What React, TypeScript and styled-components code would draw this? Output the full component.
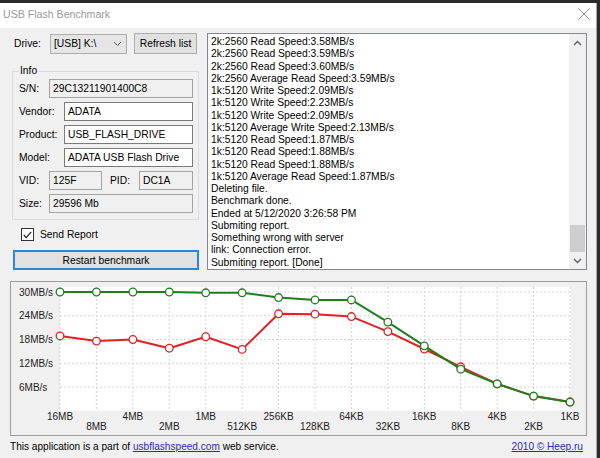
import React from "react";
import styled, { createGlobalStyle } from "styled-components";

const GlobalStyle = createGlobalStyle`
  html, body {
    margin: 0;
    padding: 0;
    background: #2b2b2b;
  }
  body {
    font-family: "Liberation Sans", Arial, sans-serif;
    font-size: 10.3px;
    color: #000;
  }
  * {
    box-sizing: border-box;
  }
`;

const Desktop = styled.div`
  width: 600px;
  height: 458px;
  overflow: hidden;
  padding-top: 3px;
  background: #2b2b2b;
`;

const Window = styled.div`
  width: 597px;
  height: 455px;
  border-right: 1px solid #a9a9a9;
  background: #f0f0f0;
  display: flex;
  flex-direction: column;
`;

const TitleBar = styled.div`
  height: 25px;
  flex-shrink: 0;
  background: #fff;
  display: flex;
  align-items: center;
  justify-content: space-between;
  padding: 0 6px 3px 3px;
`;

const TitleText = styled.span`
  color: #999;
  font-size: 10.6px;
`;

const Body = styled.div`
  flex: 1;
  display: flex;
  flex-direction: column;
  padding: 5px 9px 0 10px;
`;

const TopRow = styled.div`
  display: flex;
  gap: 7px;
  height: 237px;
`;

const LeftColumn = styled.div`
  width: 190px;
  display: flex;
  flex-direction: column;
`;

const DriveRow = styled.div`
  display: flex;
  align-items: center;
  height: 22px;
`;

const Label = styled.span<{ $w?: number; $ml?: number }>`
  width: ${({ $w }) => ($w ? `${$w}px` : "auto")};
  margin-left: ${({ $ml }) => $ml ?? 0}px;
  flex-shrink: 0;
  white-space: nowrap;
`;

const Combo = styled.div`
  width: 77px;
  height: 20px;
  background: #e5e5e5;
  border: 1px solid #adadad;
  display: flex;
  align-items: center;
  justify-content: space-between;
  padding: 0 4px 0 3px;
`;

const Button = styled.div<{ $w: number; $focused?: boolean }>`
  width: ${({ $w }) => $w}px;
  height: ${({ $focused }) => ($focused ? 20 : 21)}px;
  background: #e1e1e1;
  border: ${({ $focused }) => ($focused ? "2px solid #2a86d8" : "1px solid #adadad")};
  display: flex;
  align-items: center;
  justify-content: center;
  white-space: nowrap;
`;

const GroupBox = styled.div`
  margin: 17px 0 0 2px;
  width: 187px;
  border: 1px solid #dcdcdc;
  padding: 0 5px 6px 6px;
  display: flex;
  flex-direction: column;
  gap: 4px;
`;

const Legend = styled.div`
  width: fit-content;
  margin: -7px 0 -2px 0;
  padding: 0 1px;
  line-height: 12px;
  background: #f0f0f0;
`;

const FieldRow = styled.div`
  display: flex;
  align-items: center;
  height: 19px;
`;

const Field = styled.div<{ $readOnly?: boolean; $w?: number }>`
  height: 19px;
  ${({ $w }) => ($w ? `width: ${$w}px; flex-shrink: 0;` : "flex: 1;")}
  background: ${({ $readOnly }) => ($readOnly ? "#f0f0f0" : "#fff")};
  border: 1px solid ${({ $readOnly }) => ($readOnly ? "#a3a3a3" : "#7a7a7a")};
  display: flex;
  align-items: center;
  padding-left: 3px;
  white-space: nowrap;
  overflow: hidden;
`;

const CheckRow = styled.div`
  display: flex;
  align-items: center;
  gap: 6px;
  margin: 8px 0 0 11px;
  height: 13px;
`;

const CheckBox = styled.div`
  width: 13px;
  height: 13px;
  background: #fff;
  border: 1px solid #333;
  display: flex;
  align-items: center;
  justify-content: center;
`;

const RestartWrap = styled.div`
  margin: 9px 0 0 3px;
`;

const LogBox = styled.div`
  width: 380px;
  height: 237px;
  background: #fff;
  border: 1px solid #828790;
  display: flex;
`;

const LogText = styled.div`
  flex: 1;
  padding: 2px 3px;
  line-height: 12.25px;
  overflow: hidden;
  white-space: nowrap;
`;

const ScrollBar = styled.div`
  width: 17px;
  background: #f0f0f0;
  display: flex;
  flex-direction: column;
`;

const ScrollArrow = styled.div`
  height: 17px;
  display: flex;
  align-items: center;
  justify-content: center;
`;

const ScrollTrack = styled.div`
  flex: 1;
  display: flex;
  flex-direction: column;
  justify-content: flex-end;
  align-items: center;
`;

const ScrollThumb = styled.div`
  width: 15px;
  height: 27px;
  background: #cdcdcd;
`;

const ChartPanel = styled.div`
  margin-top: 11px;
  width: 577px;
  height: 155px;
  border: 1px solid #9c9c9c;
  background: #f0f0f0;
`;

const Footer = styled.div`
  height: 20px;
  display: flex;
  align-items: center;
  justify-content: space-between;
  padding-right: 4px;
  font-size: 10.1px;
`;

const Link = styled.span`
  color: #2a2ab0;
  text-decoration: underline;
`;

const LOG = [
  "2k:2560 Read Speed:3.58MB/s",
  "2k:2560 Read Speed:3.59MB/s",
  "2k:2560 Read Speed:3.60MB/s",
  "2k:2560 Average Read Speed:3.59MB/s",
  "1k:5120 Write Speed:2.09MB/s",
  "1k:5120 Write Speed:2.23MB/s",
  "1k:5120 Write Speed:2.09MB/s",
  "1k:5120 Average Write Speed:2.13MB/s",
  "1k:5120 Read Speed:1.87MB/s",
  "1k:5120 Read Speed:1.88MB/s",
  "1k:5120 Read Speed:1.88MB/s",
  "1k:5120 Average Read Speed:1.87MB/s",
  "Deleting file.",
  "Benchmark done.",
  "Ended at 5/12/2020 3:26:58 PM",
  "Submiting report.",
  "Something wrong with server",
  "link: Connection error.",
  "Submiting report. [Done]",
];

const SIZES = ["16MB", "8MB", "4MB", "2MB", "1MB", "512KB", "256KB", "128KB", "64KB", "32KB", "16KB", "8KB", "4KB", "2KB", "1KB"];
const WRITE = [30, 30, 30, 30, 29.8, 29.8, 28.6, 28.0, 28.0, 22.4, 16.4, 10.5, 6.8, 3.7, 2.2];
const READ = [18.9, 17.6, 18.0, 15.8, 18.7, 15.5, 24.5, 24.4, 23.8, 20.0, 15.6, 11.1, 6.8, 3.7, 2.2];

// panel inner origin in page coordinates
const OX = 11;
const OY = 282;
const px = (i: number) => 60 + i * 36.43 - OX;
const py = (v: number) => 410.75 - v * 3.958 - OY;

const Series = ({ data, color }: { data: number[]; color: string }) => (
  <g>
    <polyline
      points={data.map((v, i) => `${px(i)},${py(v)}`).join(" ")}
      fill="none"
      stroke={color}
      strokeWidth={2}
      strokeLinejoin="round"
    />
    {data.map((v, i) => (
      <circle key={i} cx={px(i)} cy={py(v)} r={3.8} fill="#fff" stroke={color} strokeWidth={1.3} />
    ))}
  </g>
);

const Chart = () => {
  const left = px(0);
  const right = px(SIZES.length - 1) + 1;
  const top = 287 - OY;
  const bottom = py(0);
  return (
    <svg width={575} height={153} style={{ display: "block" }}>
      <rect x={left} y={top} width={right - left} height={bottom - top} fill="#fff" />
      {SIZES.map((_, i) => (
        <line key={i} x1={px(i)} x2={px(i)} y1={top} y2={bottom} stroke="#d4d4d4" strokeDasharray="2 2" />
      ))}
      {[6, 12, 18, 24, 30].map((v) => (
        <line key={v} x1={left} x2={right} y1={py(v)} y2={py(v)} stroke="#d4d4d4" strokeDasharray="2 2" />
      ))}
      {[30, 24, 18, 12, 6].map((v) => (
        <text key={v} x={19 - OX} y={py(v) + 3.6} fontSize={10} fill="#222" fontFamily="Liberation Sans, Arial, sans-serif">
          {v}MB/s
        </text>
      ))}
      {SIZES.map((s, i) => (
        <text
          key={s}
          x={px(i)}
          y={(i % 2 === 0 ? 416 : 426) - OY + 3.6}
          fontSize={10}
          textAnchor="middle"
          fill="#222"
          fontFamily="Liberation Sans, Arial, sans-serif"
        >
          {s}
        </text>
      ))}
      <Series data={READ} color="#e02222" />
      <Series data={WRITE} color="#1f7f1f" />
    </svg>
  );
};

const Chevron = ({ up, color = "#606060" }: { up?: boolean; color?: string }) => (
  <svg width={9} height={6} viewBox="0 0 9 6">
    <polyline
      points={up ? "1,5 4.5,1.5 8,5" : "1,1 4.5,4.5 8,1"}
      fill="none"
      stroke={color}
      strokeWidth={1.4}
    />
  </svg>
);

const App = () => (
  <>
    <GlobalStyle />
    <Desktop>
      <Window>
        <TitleBar>
          <TitleText>USB Flash Benchmark</TitleText>
          <svg width={12} height={12} viewBox="0 0 12 12">
            <path d="M0.5 0.5 L11.5 11.5 M11.5 0.5 L0.5 11.5" stroke="#8a8a8a" strokeWidth={1} />
          </svg>
        </TitleBar>
        <Body>
          <TopRow>
            <LeftColumn>
              <DriveRow>
                <Label $w={36} $ml={4}>
                  Drive:
                </Label>
                <Combo>
                  <span>[USB] K:\</span>
                  <svg width={9} height={6} viewBox="0 0 9 6">
                    <polyline points="1,1 4.5,4.5 8,1" fill="none" stroke="#555" strokeWidth={1} />
                  </svg>
                </Combo>
                <Label $ml={7}>
                  <Button $w={63}>Refresh list</Button>
                </Label>
              </DriveRow>
              <GroupBox>
                <Legend>Info</Legend>
                <FieldRow>
                  <Label $w={30}>S/N:</Label>
                  <Field $readOnly>29C13211901400C8</Field>
                </FieldRow>
                <FieldRow>
                  <Label $w={45}>Vendor:</Label>
                  <Field>ADATA</Field>
                </FieldRow>
                <FieldRow>
                  <Label $w={45}>Product:</Label>
                  <Field>USB_FLASH_DRIVE</Field>
                </FieldRow>
                <FieldRow>
                  <Label $w={45}>Model:</Label>
                  <Field>ADATA USB Flash Drive</Field>
                </FieldRow>
                <FieldRow>
                  <Label $w={30}>VID:</Label>
                  <Field $readOnly $w={53}>
                    125F
                  </Field>
                  <Label $w={29} $ml={8}>
                    PID:
                  </Label>
                  <Field $readOnly>DC1A</Field>
                </FieldRow>
                <FieldRow>
                  <Label $w={30}>Size:</Label>
                  <Field $readOnly>29596 Mb</Field>
                </FieldRow>
              </GroupBox>
              <CheckRow>
                <CheckBox>
                  <svg width={9} height={8} viewBox="0 0 9 8">
                    <polyline points="0.8,4 3.3,6.6 8.2,0.8" fill="none" stroke="#222" strokeWidth={1.2} />
                  </svg>
                </CheckBox>
                <span>Send Report</span>
              </CheckRow>
              <RestartWrap>
                <Button $w={186} $focused>
                  Restart benchmark
                </Button>
              </RestartWrap>
            </LeftColumn>
            <LogBox>
              <LogText>
                {LOG.map((line, i) => (
                  <div key={i}>{line}</div>
                ))}
              </LogText>
              <ScrollBar>
                <ScrollArrow>
                  <Chevron up />
                </ScrollArrow>
                <ScrollTrack>
                  <ScrollThumb />
                </ScrollTrack>
                <ScrollArrow>
                  <Chevron />
                </ScrollArrow>
              </ScrollBar>
            </LogBox>
          </TopRow>
          <ChartPanel>
            <Chart />
          </ChartPanel>
          <Footer>
            <span>
              This application is a part of <Link>usbflashspeed.com</Link> web service.
            </span>
            <Link>2010 © Heep.ru</Link>
          </Footer>
        </Body>
      </Window>
    </Desktop>
  </>
);

export default App;
